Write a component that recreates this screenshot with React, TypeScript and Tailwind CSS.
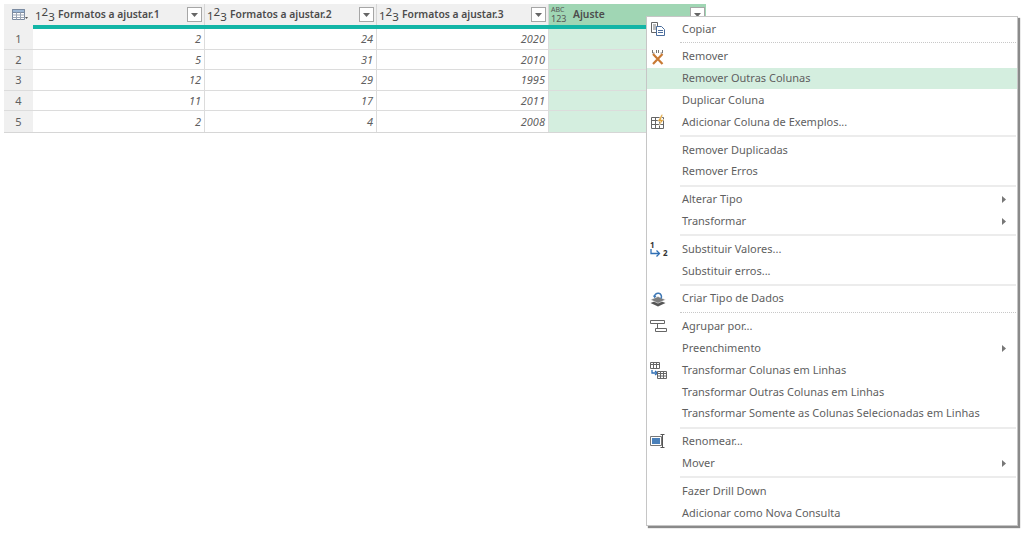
const rows = [
  [1, 2, 24, 2020],
  [2, 5, 31, 2010],
  [3, 12, 29, 1995],
  [4, 11, 17, 2011],
  [5, 2, 4, 2008],
];

function Filter() {
  return (
    <span className="flex h-[15px] w-[15px] shrink-0 items-center justify-center border border-[#a6a6a6] bg-white">
      <svg width="7" height="4" viewBox="0 0 7 4"><path d="M0 0h7L3.500 4z" fill="#666" /></svg>
    </span>
  );
}

function T123() {
  return (
    <span className="flex w-[20px] shrink-0 items-start text-[#444] leading-none text-[11.5px]">
      <span className="mt-[4px]">1</span>
      <span>2</span>
      <span className="mt-[5px]">3</span>
    </span>
  );
}

function Header({ name }: { name: string }) {
  return (
    <div className="flex w-[172px] items-center border-r border-[#d6d6d6] pl-[2px] pr-[2px]">
      <T123 />
      <span className="ml-[3px] flex-1 truncate font-semibold text-[10.3px] text-[#4c4c4c]">{name}</span>
      <Filter />
    </div>
  );
}

function Icon({ name }: { name: string }) {
  switch (name) {
    case "copy":
      return (
        <svg width="16" height="16" viewBox="0 0 16 16" fill="none" stroke="#666">
          <path d="M1.500 1.500h6v10h-6z" fill="#fff" />
          <path d="M3 4h3M3 6h3M3 8h3" stroke="#777" />
          <path d="M6.500 5.500h5l3 3v6h-8z" fill="#fff" stroke="#4a6c9b" />
          <path d="M8 9.500h5M8 11.500h5" stroke="#4a6c9b" />
        </svg>
      );
    case "remove":
      return (
        <svg width="16" height="16" viewBox="0 0 16 16" fill="none">
          <path d="M2.500 1v3h2M6.500 1v3M8.500 1v3M12.500 1v3h-2" stroke="#777" />
          <path d="M3 5l9.500 10M12.500 5L3 15" stroke="#c87a35" strokeWidth="2.200" />
        </svg>
      );
    case "examples":
      return (
        <svg width="16" height="16" viewBox="0 0 16 16" fill="none">
          <path d="M1.500 3.500h12v11h-12z" fill="#fff" stroke="#666" />
          <path d="M1.500 6.500h12M1.500 10.500h12M5.500 3.500v11M9.500 6.500v8" stroke="#666" />
          <path d="M11.500 .5L7.500 7.500h3L8.500 12.500l5.500-7h-3l2-5z" fill="#e0a33a" stroke="#fff" strokeWidth=".5" />
        </svg>
      );
    case "replace":
      return (
        <span className="flex h-[17px] w-[18px] flex-col text-[8px] font-bold leading-[8px] text-[#333]">
          <span>1</span>
          <span className="flex items-end">
            <svg width="11" height="8" viewBox="0 0 11 8" fill="none">
              <path d="M1 0v4.500h8" stroke="#2f6fb5" strokeWidth="1.300" />
              <path d="M6.500 1.500l3 3-3 3" stroke="#2f6fb5" strokeWidth="1.300" />
            </svg>
            <span className="ml-[2px]">2</span>
          </span>
        </span>
      );
    case "datatype":
      return (
        <svg width="16" height="16" viewBox="0 0 16 16" fill="none">
          <path d="M8 9l7.500 3L8 15.500 .5 12z" fill="#555" />
          <path d="M8 5.500l7.500 3.300L8 12.200 .5 8.800z" fill="#7d7d7d" stroke="#fff" strokeWidth=".5" />
          <path d="M4.500 6a3.500 3.500 0 1 1 6.500 1.500" stroke="#3f78b5" strokeWidth="1.500" />
          <path d="M2.800 4.500l1.700 2.800 2-2.200" fill="#3f78b5" />
        </svg>
      );
    case "group":
      return (
        <svg width="17" height="16" viewBox="0 0 17 16" fill="none" stroke="#666">
          <path d="M.5 2.500h14v3H.5zM5.500 10.500h11v3h-11z" fill="#fff" />
          <path d="M7.500 5.500v5" />
        </svg>
      );
    case "unpivot":
      return (
        <svg width="17" height="17" viewBox="0 0 17 17" fill="none">
          <path d="M.5 .5h9v6h-9zM.5 2.500h9M3.500 .5v6M6.500 .5v6" stroke="#666" />
          <path d="M2 8v3h5" stroke="#2f6fb5" strokeWidth="1.300" />
          <path d="M5 9l2.500 2L5 13" stroke="#2f6fb5" strokeWidth="1.300" />
          <path d="M7.500 9.500h9v7h-9zM7.500 11.500h9M7.500 14h9M10.500 9.500v7M13.500 9.500v7" stroke="#666" />
        </svg>
      );
    case "rename":
      return (
        <svg width="17" height="16" viewBox="0 0 17 16" fill="none">
          <path d="M.5 3.500h11v9H.5z" fill="#fff" stroke="#777" />
          <path d="M2 5h8v6H2z" fill="#4a80ba" />
          <path d="M10.500 1.500h4M10.500 14.500h4M12.500 1.500v13" stroke="#555" />
        </svg>
      );
    default:
      return null;
  }
}

type Entry =
  | { sep: true; dotted?: boolean }
  | { label: string; icon?: string; arrow?: boolean; active?: boolean };

const menu: Entry[] = [
  { label: "Copiar", icon: "copy" },
  { sep: true, dotted: true },
  { label: "Remover", icon: "remove" },
  { label: "Remover Outras Colunas", active: true },
  { label: "Duplicar Coluna" },
  { label: "Adicionar Coluna de Exemplos...", icon: "examples" },
  { sep: true },
  { label: "Remover Duplicadas" },
  { label: "Remover Erros" },
  { sep: true },
  { label: "Alterar Tipo", arrow: true },
  { label: "Transformar", arrow: true },
  { sep: true },
  { label: "Substituir Valores...", icon: "replace" },
  { label: "Substituir erros..." },
  { sep: true },
  { label: "Criar Tipo de Dados", icon: "datatype" },
  { sep: true, dotted: true },
  { label: "Agrupar por...", icon: "group" },
  { label: "Preenchimento", arrow: true },
  { label: "Transformar Colunas em Linhas", icon: "unpivot" },
  { label: "Transformar Outras Colunas em Linhas" },
  { label: "Transformar Somente as Colunas Selecionadas em Linhas" },
  { sep: true },
  { label: "Renomear...", icon: "rename" },
  { label: "Mover", arrow: true },
  { sep: true },
  { label: "Fazer Drill Down" },
  { label: "Adicionar como Nova Consulta" },
];

export default function App() {
  return (
    <div className="relative h-[533px] w-[1024px] overflow-hidden bg-white font-['Open_Sans',sans-serif] text-[#5f5f5f]">
      <div className="pl-[4px] pt-[4px]">
        <div className="w-[702px] border-b border-[#d6d6d6]">
          <div className="flex h-[21px] bg-[#f0f0f0]">
            <div className="flex w-[29px] items-center justify-center gap-[1px] pl-[2px]">
              <svg width="16" height="12" viewBox="0 0 16 12" fill="none">
                <path d="M.5.500h12v10H.5z" fill="#fff" stroke="#7a8aa0" />
                <path d="M.5.500h12v3H.5z" fill="#9db8d6" stroke="#7a8aa0" />
                <path d="M.5 6h12M.5 8.500h12M4.500 3.500v7M8.500 3.500v7" stroke="#9aa5b5" />
                <path d="M13 8h3l-1.500 2z" fill="#555" />
              </svg>
            </div>
            <Header name="Formatos a ajustar.1" />
            <Header name="Formatos a ajustar.2" />
            <Header name="Formatos a ajustar.3" />
            <div className="flex flex-1 items-center bg-[#a0d6b4] pl-[2px] pr-[1px]">
              <span className="flex w-[18px] flex-col text-[#555]">
                <span className="text-[7px] leading-[8px]">ABC</span>
                <span className="text-[9px] leading-[10px]">123</span>
              </span>
              <span className="ml-[4px] flex-1 font-semibold text-[10.3px] text-[#4c4c4c]">Ajuste</span>
              <Filter />
            </div>
          </div>
          <div className="flex h-[4px] bg-[#f0f0f0]">
            <div className="w-[29px]" />
            <div className="flex-1 bg-[#12b5a6]" />
          </div>
          {rows.map((r) => (
            <div key={r[0]} className="flex h-[20.6px] border-b border-[#dcdcdc] text-[11px] italic last:border-b-0">
              <div className="flex w-[29px] items-center justify-center bg-[#f0f0f0] pt-[1px] not-italic">{r[0]}</div>
              {r.slice(1).map((v, i) => (
                <div key={i} className="flex w-[172px] items-center justify-end border-r border-[#dcdcdc] pr-[3px] pt-[1px]">{v}</div>
              ))}
              <div className="flex-1 bg-[#d4eedf]" />
            </div>
          ))}
        </div>
      </div>

      <div className="absolute left-[646px] top-[16px] w-[372px] border border-[#c6c6c6] bg-white py-[1px] shadow-[2px_2px_1px_#8a8a8a] text-[11px]">
        {menu.map((m, i) =>
          "sep" in m ? (
            <div key={i} className="flex h-[6px] items-center pl-[33px] pr-[1px]">
              <div className={m.dotted ? "w-full border-t border-dotted border-[#c8c8c8]" : "w-full border-t-2 border-[#ececec]"} />
            </div>
          ) : (
            <div key={i} className={"flex h-[21.8px] items-center " + (m.active ? "bg-[#d4eedf]" : "")}>
              <span className="flex w-[35px] shrink-0 items-center justify-start pl-[3px]">
                {m.icon ? <Icon name={m.icon} /> : null}
              </span>
              <span className="flex-1 whitespace-nowrap">{m.label}</span>
              {m.arrow ? (
                <svg className="mr-[11px]" width="4" height="7" viewBox="0 0 4 7"><path d="M0 0l4 3.500L0 7z" fill="#777" /></svg>
              ) : null}
            </div>
          )
        )}
      </div>
    </div>
  );
}
